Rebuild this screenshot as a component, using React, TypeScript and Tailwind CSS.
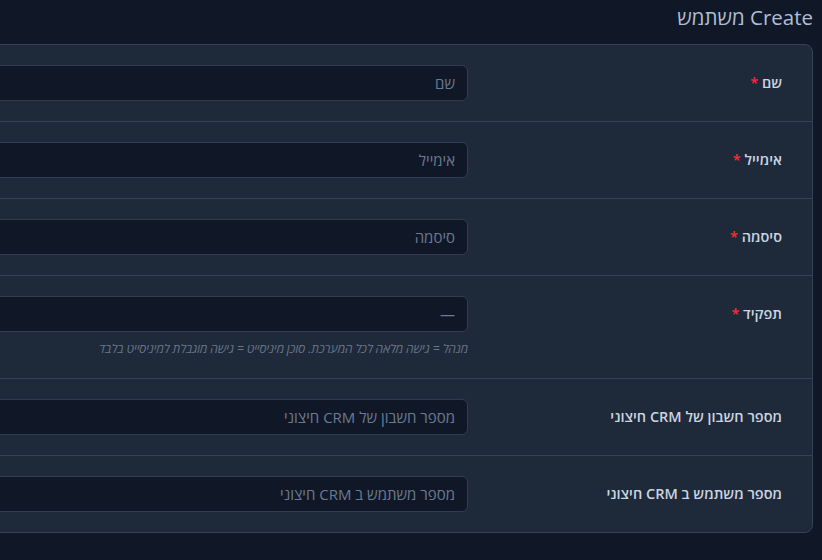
import React from "react";

type Field = { label: string; placeholder: string; required?: boolean; hint?: string; select?: boolean };

const fields: Field[] = [
  { label: "שם", placeholder: "שם", required: true },
  { label: "אימייל", placeholder: "אימייל", required: true },
  { label: "סיסמה", placeholder: "סיסמה", required: true },
  {
    label: "תפקיד",
    placeholder: "—",
    required: true,
    select: true,
    hint: "מנהל = גישה מלאה לכל המערכת. סוכן מיניסייט = גישה מוגבלת למיניסייט בלבד",
  },
  { label: "מספר חשבון של CRM חיצוני", placeholder: "מספר חשבון של CRM חיצוני" },
  { label: "מספר משתמש ב CRM חיצוני", placeholder: "מספר משתמש ב CRM חיצוני" },
];

export default function App() {
  return (
    <div
      dir="rtl"
      className="w-[822px] h-[560px] overflow-hidden bg-[#101828] font-['Open_Sans','Noto_Sans',sans-serif]"
    >
      <div className="h-[44px] pr-[9px] pt-[3px]">
        <h1 className="text-[20.5px] leading-[28px] text-[#aebfd3] font-normal">Create משתמש</h1>
      </div>
      <div className="mr-[9px] w-[1200px] bg-[#1e2939] border border-[#364153] rounded-lg">
        {fields.map((f, i) => (
          <div
            key={i}
            className={
              "flex items-start gap-6 pr-[30px] py-5 " +
              (i < fields.length - 1 ? "border-b border-[#364153]" : "")
            }
          >
            <div className="w-[290px] h-[36px] flex items-center shrink-0">
              <span className="text-[14.5px] font-semibold text-[#cbd4e0]">
                {f.label}
                {f.required && <span className="text-[#fb2c36]"> *</span>}
              </span>
            </div>
            <div className="flex-1">
              <div className="h-[36px] rounded-md border border-[#303d50] bg-[#101828] px-3 flex items-center">
                <span className="text-[15px] text-[#6b7a90]">{f.placeholder}</span>
              </div>
              {f.hint && (
                <div className="mt-2 text-[12px] leading-[18px] italic text-[#6a7688]">{f.hint}</div>
              )}
            </div>
          </div>
        ))}
      </div>
    </div>
  );
}
